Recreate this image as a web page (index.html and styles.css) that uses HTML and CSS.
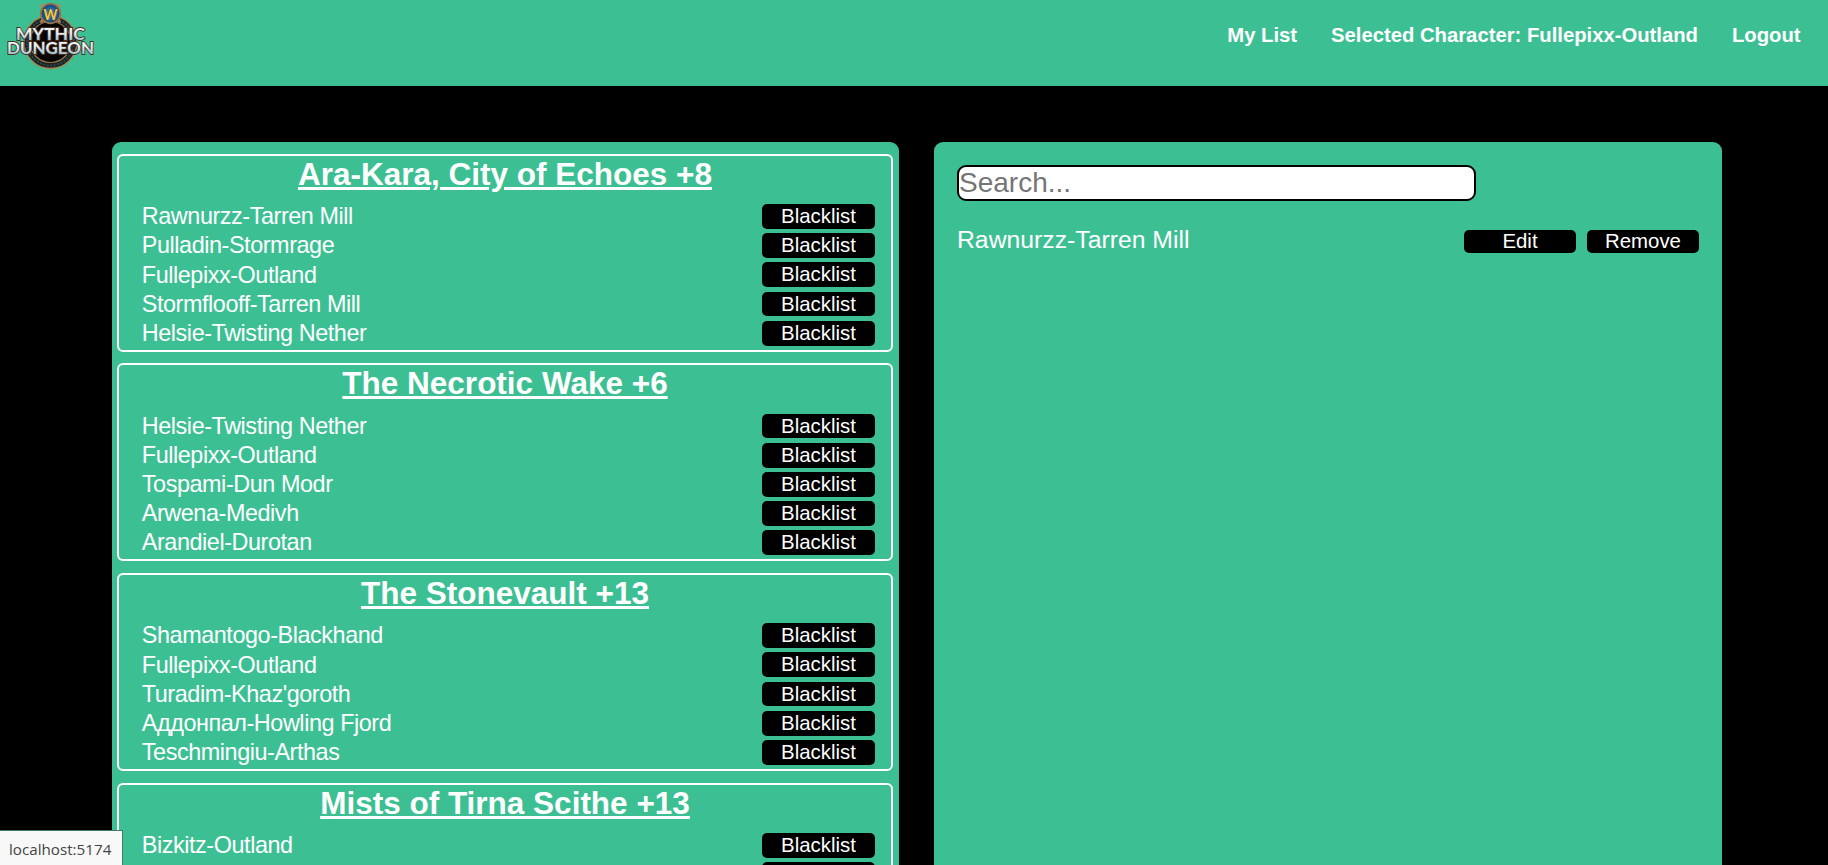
FILE: index.html
```html
<!DOCTYPE html>
<html lang="en">
<head>
<meta charset="utf-8">
<title>Mythic Dungeon</title>
<link rel="stylesheet" href="styles.css">
</head>
<body>
<header class="navbar">
  <a class="logo" href="#">
    <svg width="100" height="72" viewBox="0 0 100 72" role="img" aria-label="Mythic Dungeon">
      <defs>
        <linearGradient id="steel" x1="0" y1="0" x2="0" y2="1">
          <stop offset="0" stop-color="#ffffff"/><stop offset=".5" stop-color="#dfeef2"/><stop offset="1" stop-color="#7fb0c4"/>
        </linearGradient>
        <radialGradient id="orb"><stop offset="0" stop-color="#3a9fe0"/><stop offset="1" stop-color="#0b3c70"/></radialGradient>
      </defs>
      <circle cx="50.500" cy="42" r="26.500" fill="#1a2224" stroke="#a8854f" stroke-width="1.300"/>
      <circle cx="50.500" cy="42" r="23.500" fill="none" stroke="#30474a" stroke-width="2" stroke-dasharray="2 1.500"/>
      <circle cx="50.500" cy="42" r="20.500" fill="#080605" stroke="#9b7648" stroke-width="1.200"/>
      <circle cx="50.500" cy="13.500" r="9.800" fill="url(#orb)" stroke="#99704a" stroke-width="1.800"/>
      <path d="M40 4l4 1-3 3zM61 4l-4 1 3 3zM40 23l4-1-3-3zM61 23l-4-1 3-3z" fill="#b48a58"/>
      <g text-anchor="middle" class="logo-type">
        <text x="50.500" y="19.500" class="logo-w" textLength="14" lengthAdjust="spacingAndGlyphs">W</text>
        <text x="50.500" y="39.500" class="logo-word" textLength="69" lengthAdjust="spacingAndGlyphs">MYTHIC</text>
        <text x="50.500" y="53.500" class="logo-word" textLength="87" lengthAdjust="spacingAndGlyphs">DUNGEON</text>
      </g>
    </svg>
  </a>
  <nav class="links">
    <a href="#">My List</a>
    <a href="#">Selected Character: Fullepixx-Outland</a>
    <a href="#">Logout</a>
  </nav>
</header>
<main class="panels">
  <section class="panel runs">
    <article class="run">
      <h2>Ara-Kara, City of Echoes +8</h2>
      <div class="player"><span>Rawnurzz-Tarren Mill</span><button>Blacklist</button></div>
      <div class="player"><span>Pulladin-Stormrage</span><button>Blacklist</button></div>
      <div class="player"><span>Fullepixx-Outland</span><button>Blacklist</button></div>
      <div class="player"><span>Stormflooff-Tarren Mill</span><button>Blacklist</button></div>
      <div class="player"><span>Helsie-Twisting Nether</span><button>Blacklist</button></div>
    </article>
    <article class="run">
      <h2>The Necrotic Wake +6</h2>
      <div class="player"><span>Helsie-Twisting Nether</span><button>Blacklist</button></div>
      <div class="player"><span>Fullepixx-Outland</span><button>Blacklist</button></div>
      <div class="player"><span>Tospami-Dun Modr</span><button>Blacklist</button></div>
      <div class="player"><span>Arwena-Medivh</span><button>Blacklist</button></div>
      <div class="player"><span>Arandiel-Durotan</span><button>Blacklist</button></div>
    </article>
    <article class="run">
      <h2>The Stonevault +13</h2>
      <div class="player"><span>Shamantogo-Blackhand</span><button>Blacklist</button></div>
      <div class="player"><span>Fullepixx-Outland</span><button>Blacklist</button></div>
      <div class="player"><span>Turadim-Khaz'goroth</span><button>Blacklist</button></div>
      <div class="player"><span>Аддонпал-Howling Fjord</span><button>Blacklist</button></div>
      <div class="player"><span>Teschmingiu-Arthas</span><button>Blacklist</button></div>
    </article>
    <article class="run">
      <h2>Mists of Tirna Scithe +13</h2>
      <div class="player"><span>Bizkitz-Outland</span><button>Blacklist</button></div>
      <div class="player"><span></span><button aria-label="Blacklist"></button></div>
    </article>
  </section>
  <section class="panel blacklist">
    <input class="search" type="text" placeholder="Search...">
    <div class="entry"><span>Rawnurzz-Tarren Mill</span><button>Edit</button><button>Remove</button></div>
  </section>
</main>
<div class="status">localhost:5174</div>
</body>
</html>
```
FILE: styles.css
```css
* { box-sizing: border-box; }
body {
  margin: 0;
  height: 865px;
  overflow: hidden;
  background: #000;
  color: #fff;
  font-family: "Liberation Sans", Arial, sans-serif;
}
.navbar {
  display: flex;
  justify-content: space-between;
  height: 86px;
  background: #3dbf94;
}
.logo-type { font-family: Lato, "Open Sans", sans-serif; font-weight: bold; }
.logo-w { font-size: 16px; fill: #f5c94b; stroke: #5b3c10; stroke-width: 1px; paint-order: stroke; }
.logo-word { font-size: 17.5px; fill: url(#steel); stroke: #4b2d1b; stroke-width: 1.8px; paint-order: stroke; }
.links { display: flex; gap: 34px; padding: 23px 27.5px 0 0; }
.links a { color: #fff; font-size: 20.25px; line-height: 24px; font-weight: bold; text-decoration: none; }
.panels {
  display: grid;
  grid-template-columns: 787px 788px;
  gap: 35px;
  padding: 56px 0 0 112px;
}
.panel { height: 723px; overflow: hidden; background: #3dbf94; border-radius: 9px 9px 0 0; }
.runs { display: flex; flex-direction: column; gap: 11.6px; padding: 11.8px 6px 0 5px; }
.run {
  flex: none;
  height: 198px;
  border: 2px solid #fff;
  border-radius: 6px;
  padding: 0 16px 0 22.8px;
}
.run h2 {
  margin: 0 -16px 10.05px -22.8px;
  font-size: 31.5px;
  line-height: 36px;
  text-align: center;
  text-decoration: underline;
}
.player { display: flex; align-items: center; justify-content: space-between; height: 29.2px; font-size: 23.4px; letter-spacing: -.43px; }
.player span { padding-top: .4px; }
button {
  width: 113px;
  height: 24.7px;
  padding: 0;
  border: 0;
  border-radius: 5px;
  background: #000;
  color: #fff;
  font: 20.4px "Liberation Sans", Arial, sans-serif;
  letter-spacing: normal;
}
.blacklist { padding: 23px 23px 0; }
.search {
  display: block;
  width: 519px;
  height: 36px;
  padding: 0;
  border: 2px solid #000;
  border-radius: 9px;
  font: 28px "Liberation Sans", Arial, sans-serif;
}
.entry { display: flex; align-items: center; gap: 11px; margin-top: 25px; height: 28px; font-size: 24.75px; }
.entry span { flex: 1; }
.entry button { width: 112px; height: 23px; margin-top: 3px; }
.status {
  position: fixed;
  left: 0;
  bottom: 0;
  width: 123px;
  height: 35px;
  padding-left: 9px;
  border-top: 1px solid #447a68;
  border-right: 1px solid #447a68;
  background: #f8f8f8;
  color: #444;
  font: 15.2px/37px "Open Sans", "Noto Sans", sans-serif;
}
```
